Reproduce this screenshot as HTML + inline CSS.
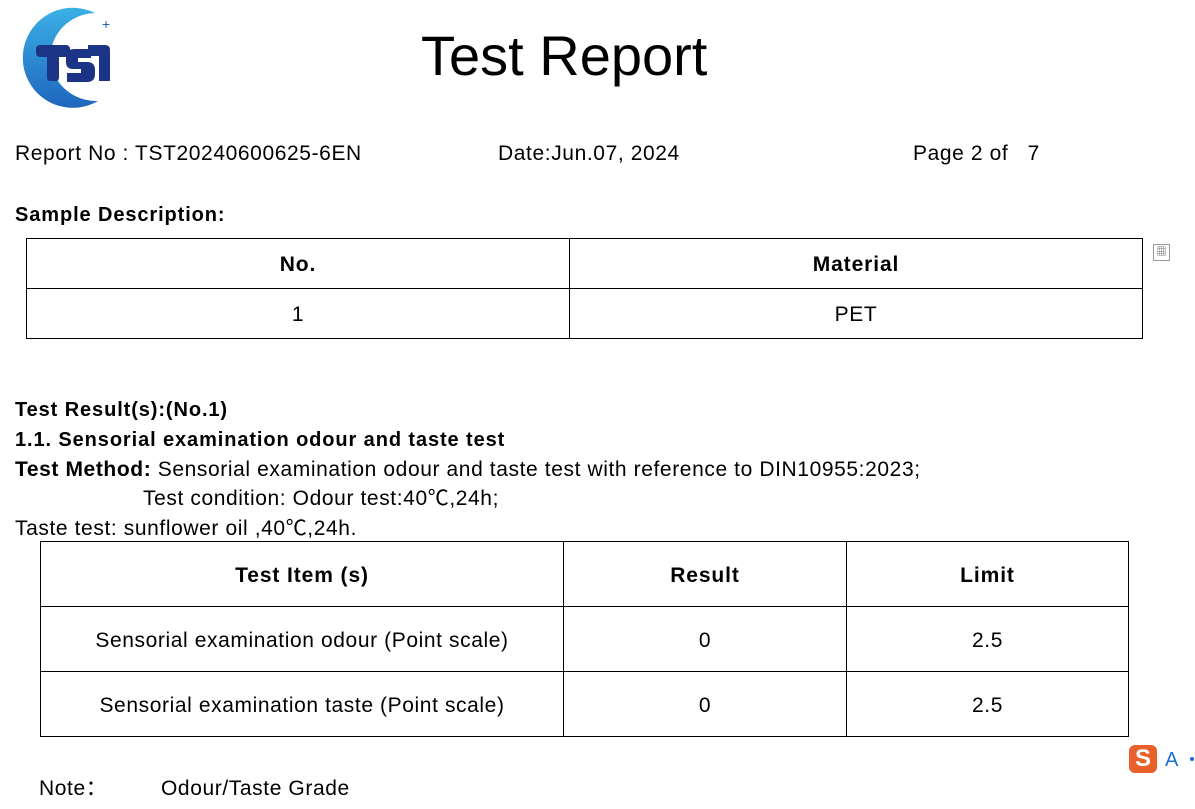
<html><head><style>
body{margin:0;width:1195px;height:809px;background:#fff;position:relative;overflow:hidden;font-family:"Liberation Sans","Noto Sans CJK SC",sans-serif;color:#000}
.t{position:absolute;font-size:21px;letter-spacing:0.6px;white-space:nowrap;line-height:1}
.b{font-weight:bold;letter-spacing:0.9px}
table{position:absolute;border-collapse:collapse;font-size:21px;letter-spacing:0.6px}
td{border:1px solid #000;text-align:center;padding:3px 0 0 0}
</style></head><body>
<svg style="position:absolute;left:10px;top:5px" width="110" height="105" viewBox="0 0 110 105">
<defs><linearGradient id="g" x1="0" y1="0" x2="0" y2="1"><stop offset="0" stop-color="#3bb0e6"/><stop offset="1" stop-color="#1e66bd"/></linearGradient></defs>
<path d="M85 8 A50 50 0 1 0 88 96 A46 44 0 1 1 85 8Z" fill="url(#g)"/>
<text x="92" y="24" font-size="14" fill="#1d5fb0" font-family="Liberation Sans">+</text>
<g fill="#1b3485">
<rect x="26" y="40" width="34" height="12" rx="4"/>
<rect x="37" y="40" width="12" height="36" rx="3"/>
<path d="M56 52 q0-8 9-8 h16 v9 h-13 v4 h9 q8 0 8 8 v4 q0 8-8 8 h-20 v-9 h14 v-4 h-8 q-7 0-7-7z"/>
<path d="M78 40 h17 q5 0 5 5 v31 h-11 v-25 h-11z"/>
</g>
</svg>
<div class="t" style="left:421px;top:28px;font-size:56px;letter-spacing:0">Test Report</div>
<div class="t" style="left:15px;top:143px">Report No : TST20240600625-6EN</div>
<div class="t" style="left:498px;top:143px">Date:Jun.07, 2024</div>
<div class="t" style="left:913px;top:143px">Page 2 of &nbsp;&nbsp;7</div>
<div class="t b" style="left:15px;top:205px;font-size:20px">Sample Description:</div>
<table style="left:26px;top:238px;width:1117px"><tr style="height:50px"><td class="b" style="width:542px">No.</td><td class="b">Material</td></tr><tr style="height:50px"><td>1</td><td>PET</td></tr></table>
<div style="position:absolute;left:1153px;top:244px;width:15px;height:15px;border:1px solid #999;font-size:10px;line-height:15px;text-align:center;color:#555">▦</div>
<div class="t b" style="left:15px;top:400px;font-size:20px">Test Result(s):(No.1)</div>
<div class="t b" style="left:15px;top:430px;font-size:20px">1.1. Sensorial examination odour and taste test</div>
<div class="t" style="left:15px;top:459px"><b>Test Method:</b> Sensorial examination odour and taste test with reference to DIN10955:2023;</div>
<div class="t" style="left:143px;top:488px">Test condition: Odour test:40℃,24h;</div>
<div class="t" style="left:15px;top:518px">Taste test: sunflower oil ,40℃,24h.</div>
<table style="left:40px;top:541px;width:1089px"><tr style="height:65px"><td class="b" style="width:522px">Test Item (s)</td><td class="b" style="width:282px">Result</td><td class="b">Limit</td></tr>
<tr style="height:65px"><td>Sensorial examination odour (Point scale)</td><td>0</td><td>2.5</td></tr>
<tr style="height:65px"><td>Sensorial examination taste (Point scale)</td><td>0</td><td>2.5</td></tr></table>
<div class="t" style="left:39px;top:778px">Note：</div>
<div class="t" style="left:161px;top:778px">Odour/Taste Grade</div>
<div style="position:absolute;left:1129px;top:745px;width:28px;height:28px;background:#e8602c;border-radius:6px;color:#fff;font-weight:bold;font-size:24px;text-align:center;line-height:28px">S</div>
<div class="t" style="left:1165px;top:750px;color:#1d6fd0;font-size:20px">A</div>
<div style="position:absolute;left:1190px;top:757px;width:4px;height:4px;background:#1d6fd0;border-radius:2px"></div>
</body></html>
